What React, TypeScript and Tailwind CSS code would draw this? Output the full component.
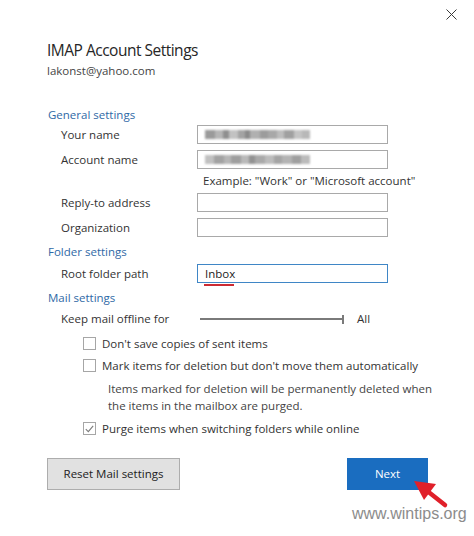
import React from "react";

const blurA = [
  { w: 10, c: "#9a9a9a" }, { w: 8, c: "#b5b5b5" }, { w: 6, c: "#8f8f8f" }, { w: 9, c: "#c2c2c2" },
  { w: 7, c: "#a3a3a3" }, { w: 5, c: "#8a8a8a" }, { w: 10, c: "#b0b0b0" }, { w: 8, c: "#9c9c9c" },
  { w: 9, c: "#a8a8a8" }, { w: 7, c: "#bdbdbd" }, { w: 10, c: "#a0a0a0" }, { w: 8, c: "#c4c4c4" },
  { w: 8, c: "#b8b8b8" },
];
const blurB = [
  { w: 9, c: "#c0c0c0" }, { w: 10, c: "#a2a2a2" }, { w: 7, c: "#b6b6b6" }, { w: 10, c: "#9e9e9e" },
  { w: 8, c: "#b9b9b9" }, { w: 6, c: "#929292" }, { w: 10, c: "#a9a9a9" }, { w: 9, c: "#bcbcbc" },
  { w: 8, c: "#a4a4a4" }, { w: 10, c: "#b3b3b3" }, { w: 9, c: "#9f9f9f" }, { w: 9, c: "#bbbbbb" },
];

function Smudge({ cells }: { cells: { w: number; c: string }[] }) {
  return (
    <div className="flex h-[9px] blur-[1.2px]">
      {cells.map((cell, i) => (
        <div key={i} className="h-full" style={{ width: cell.w, background: cell.c }} />
      ))}
    </div>
  );
}

function Section({ children, className = "" }: { children: React.ReactNode; className?: string }) {
  return (
    <div className={`pl-[48px] h-[18px] leading-[18px] text-[11.5px] text-[#2f69a6] ${className}`}>{children}</div>
  );
}

function Field({
  label,
  children,
  focused = false,
}: {
  label: string;
  children?: React.ReactNode;
  focused?: boolean;
}) {
  return (
    <div className="flex items-center h-[25px]">
      <div className="w-[197px] pl-[61px] text-[11.5px] text-[#333]">{label}</div>
      <div
        className={`relative w-[191px] h-[19px] border bg-white flex items-center pl-[7px] ${
          focused ? "border-[#3f86c6]" : "border-[#a9a9a9]"
        }`}
      >
        {children}
      </div>
    </div>
  );
}

function Check({ checked = false, label, className = "" }: { checked?: boolean; label: string; className?: string }) {
  return (
    <div className={`flex items-center h-[13px] pl-[83px] ${className}`}>
      <div className="w-[13px] h-[13px] border border-[#a6a6a6] bg-white flex items-center justify-center">
        {checked && (
          <svg width="9" height="8" viewBox="0 0 9 8">
            <path d="M0.8 4.2 L3.3 6.6 L8.2 0.8" fill="none" stroke="#7a7a7a" strokeWidth="1.1" />
          </svg>
        )}
      </div>
      <span className="ml-[6px] text-[11.5px] text-[#333] whitespace-nowrap">{label}</span>
    </div>
  );
}

export default function App() {
  return (
    <div className="relative w-[474px] h-[536px] bg-white overflow-hidden font-['Open_Sans',sans-serif]">
      <div className="flex justify-end pt-[6px] pr-[15px]">
        <div className="w-[16px] h-[16px] flex items-center justify-center">
          <svg width="11" height="11" viewBox="0 0 11 11">
            <path d="M0.5 0.5 L10.5 10.5 M10.5 0.5 L0.5 10.5" stroke="#3a3a3a" strokeWidth="1" />
          </svg>
        </div>
      </div>

      <div className="pl-[47px] mt-[16px] h-[24px] leading-[24px] text-[15.5px] tracking-[-0.5px] text-[#262626]">
        IMAP Account Settings
      </div>
      <div className="pl-[47px] h-[18px] leading-[18px] text-[11.5px] text-[#444]">lakonst@yahoo.com</div>

      <Section className="mt-[26px]">General settings</Section>
      <div className="mt-[-2px]">
        <Field label="Your name">
          <Smudge cells={blurA} />
        </Field>
        <Field label="Account name">
          <Smudge cells={blurB} />
        </Field>
        <div className="h-[18px] leading-[18px] pl-[203px] text-[11.5px] text-[#333] whitespace-nowrap">
          Example: "Work" or "Microsoft account"
        </div>
        <Field label="Reply-to address" />
        <Field label="Organization" />
      </div>

      <Section className="mt-[3px]">Folder settings</Section>
      <Field label="Root folder path" focused>
        <span className="text-[11.5px] text-[#222]">Inbox</span>
        <div className="absolute left-[6px] top-full mt-[2px] w-[30px] h-[2px] bg-[#cc2b33]" />
      </Field>

      <Section className="mt-[3px]">Mail settings</Section>
      <div className="flex items-center h-[20px] mt-[2px]">
        <div className="w-[200px] pl-[61px] text-[11.5px] text-[#333]">Keep mail offline for</div>
        <div className="w-[142px] h-[2px] bg-[#7a7a7a]" />
        <div className="w-[2px] h-[9px] bg-[#7a7a7a]" />
        <span className="ml-[13px] text-[11.5px] text-[#333]">All</span>
      </div>

      <Check label="Don't save copies of sent items" className="mt-[8px]" />
      <Check label="Mark items for deletion but don't move them automatically" className="mt-[9px]" />
      <div className="pl-[108px] mt-[8px] text-[11.5px] leading-[17px] text-[#444] whitespace-nowrap">
        Items marked for deletion will be permanently deleted when
        <br />
        the items in the mailbox are purged.
      </div>
      <Check checked label="Purge items when switching folders while online" className="mt-[8px]" />

      <div className="flex pl-[47px] mt-[23px]">
        <button className="w-[133px] h-[32px] bg-[#e1e1e1] border border-[#adadad] text-[11.5px] text-[#222]">
          Reset Mail settings
        </button>
        <button className="ml-[167px] w-[81px] h-[32px] bg-[#1a6dc0] text-[11.5px] text-white">Next</button>
      </div>

      <svg
        className="absolute left-[404px] top-[474px] pointer-events-none"
        width="48"
        height="38"
        viewBox="0 0 48 38"
      >
        <path d="M41 31 L22 16" stroke="#e0202a" strokeWidth="4.5" strokeLinecap="round" />
        <path d="M10 7 L32 10 L20 26 Z" fill="#e0202a" />
      </svg>

      <div className="absolute left-[352px] top-[505px] text-[16px] leading-[18px] text-[#8c8c8c] font-['Liberation_Sans',Arial,sans-serif]">
        www.wintips.org
      </div>
    </div>
  );
}
